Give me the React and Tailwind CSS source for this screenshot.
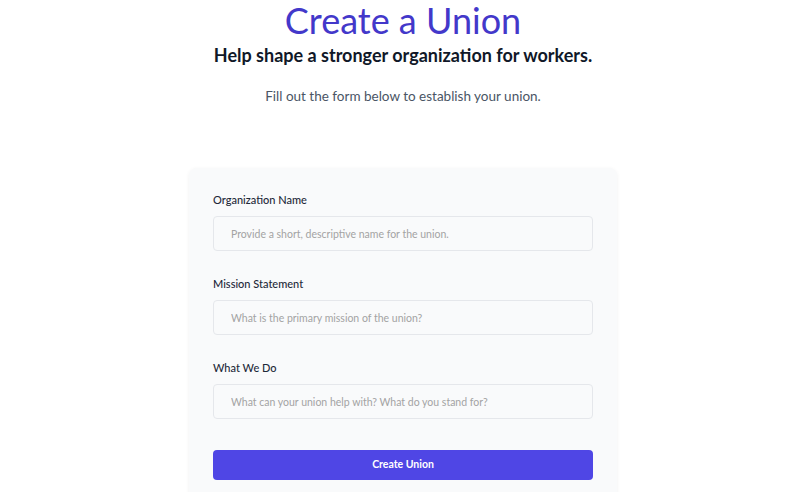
import React from 'react'

const fields = [
  { label: 'Organization Name', placeholder: 'Provide a short, descriptive name for the union.' },
  { label: 'Mission Statement', placeholder: 'What is the primary mission of the union?' },
  { label: 'What We Do', placeholder: 'What can your union help with? What do you stand for?' },
]

export default function App() {
  return (
    <div className="min-h-screen bg-white font-['Lato','Liberation_Sans',sans-serif] flex flex-col items-center">
      <h1 className="text-[36px] leading-[40px] text-[#4338ca]">Create a Union</h1>
      <h2 className="text-[18px] leading-[24px] font-bold text-gray-900 mt-[3px]">
        Help shape a stronger organization for workers.
      </h2>
      <p className="text-[13.5px] leading-[20px] text-gray-600 mt-[19px]">
        Fill out the form below to establish your union.
      </p>
      <div className="mt-[62px] w-[428px] bg-[#f9fafb] rounded-lg shadow-[0_1px_4px_rgba(0,0,0,0.06)] px-6 pt-[24px] pb-6">
        {fields.map((f) => (
          <div key={f.label} className="mb-[25px]">
            <label className="block text-[11px] leading-[16px] text-gray-800 font-medium mb-[8px]">{f.label}</label>
            <input
              className="w-full h-[35px] rounded border border-gray-200 bg-[#f9fafb] px-[17px] text-[10.5px] placeholder:text-[#a3a3a3] outline-none"
              placeholder={f.placeholder}
            />
          </div>
        ))}
        <button className="mt-[6px] w-full h-[30px] rounded bg-[#4f46e5] text-white text-[10.5px] font-bold">
          Create Union
        </button>
      </div>
    </div>
  )
}
